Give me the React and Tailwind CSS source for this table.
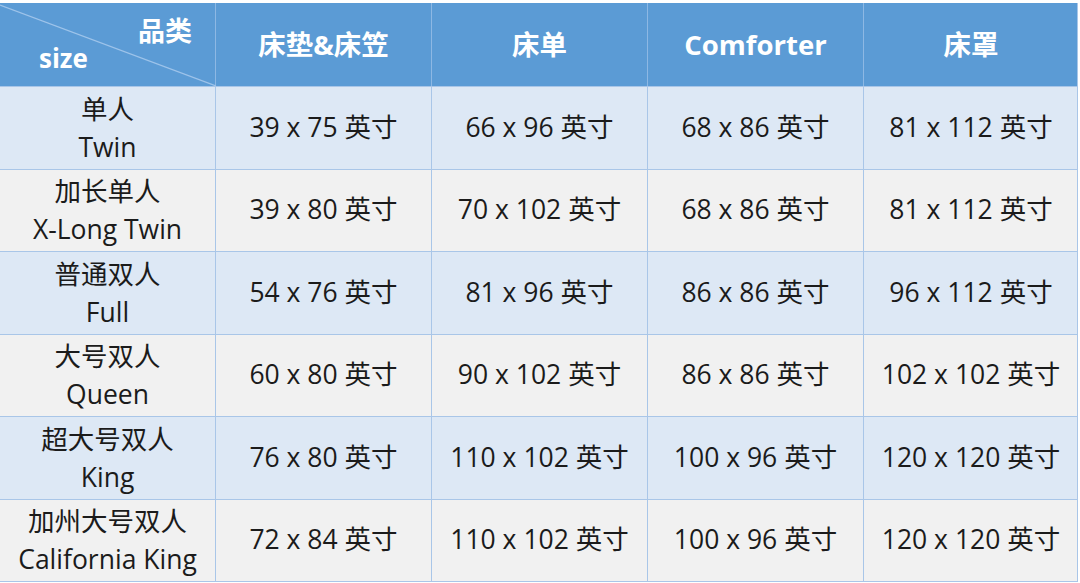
const COLS = ['床垫&床笠', '床单', 'Comforter', '床罩'];

const ROWS = [
  { zh: '单人', en: 'Twin', cells: ['39 x 75 英寸', '66 x 96 英寸', '68 x 86 英寸', '81 x 112 英寸'] },
  { zh: '加长单人', en: 'X-Long Twin', cells: ['39 x 80 英寸', '70 x 102 英寸', '68 x 86 英寸', '81 x 112 英寸'] },
  { zh: '普通双人', en: 'Full', cells: ['54 x 76 英寸', '81 x 96 英寸', '86 x 86 英寸', '96 x 112 英寸'] },
  { zh: '大号双人', en: 'Queen', cells: ['60 x 80 英寸', '90 x 102 英寸', '86 x 86 英寸', '102 x 102 英寸'] },
  { zh: '超大号双人', en: 'King', cells: ['76 x 80 英寸', '110 x 102 英寸', '100 x 96 英寸', '120 x 120 英寸'] },
  { zh: '加州大号双人', en: 'California King', cells: ['72 x 84 英寸', '110 x 102 英寸', '100 x 96 英寸', '120 x 120 英寸'] },
];

const FONT = { fontFamily: '"Open Sans", "Noto Sans CJK SC", sans-serif' };

export default function App() {
  return (
    <div className="w-[1080px] h-[583px] bg-white pt-[3px]" style={FONT}>
      <div className="w-[1078px] border-r border-b border-[#a9c6e8]">
        {/* header */}
        <div className="grid grid-cols-[216px_216px_216px_216px_214px] h-[83px] bg-[#5b9bd5] text-white font-bold">
          <div className="relative border-r border-[#8db8e4]">
            <svg className="absolute inset-0" width="216" height="83" viewBox="0 0 216 83">
              <line x1="0" y1="2" x2="216" y2="83" stroke="#9dc3ea" strokeWidth="1.2" />
            </svg>
            <span className="absolute left-[138px] top-[14px] text-[27px] leading-none">品类</span>
            <span className="absolute left-[39px] top-[42px] text-[26px] leading-none">size</span>
          </div>
          {COLS.map((c, i) => (
            <div
              key={c}
              className={`flex items-center justify-center text-[27.5px] ${i < 3 ? 'border-r border-[#8db8e4]' : ''}`}
            >
              {c}
            </div>
          ))}
        </div>

        {/* body */}
        {ROWS.map((r, idx) => (
          <div
            key={r.en}
            className={`grid grid-cols-[216px_216px_216px_216px_214px] h-[82.5px] border-t border-[#a9c6e8] text-[#1b1b1b] ${idx % 2 === 0 ? 'bg-[#dde8f5]' : 'bg-[#f1f1f1]'}`}
          >
            <div className="flex flex-col items-center justify-center border-r border-[#a9c6e8] text-[26.5px] leading-[38px]">
              <span>{r.zh}</span>
              <span>{r.en}</span>
            </div>
            {r.cells.map((c, i) => (
              <div
                key={i}
                className={`flex items-center justify-center text-[26.5px] ${i < 3 ? 'border-r border-[#a9c6e8]' : ''}`}
              >
                {c}
              </div>
            ))}
          </div>
        ))}
      </div>
    </div>
  );
}
